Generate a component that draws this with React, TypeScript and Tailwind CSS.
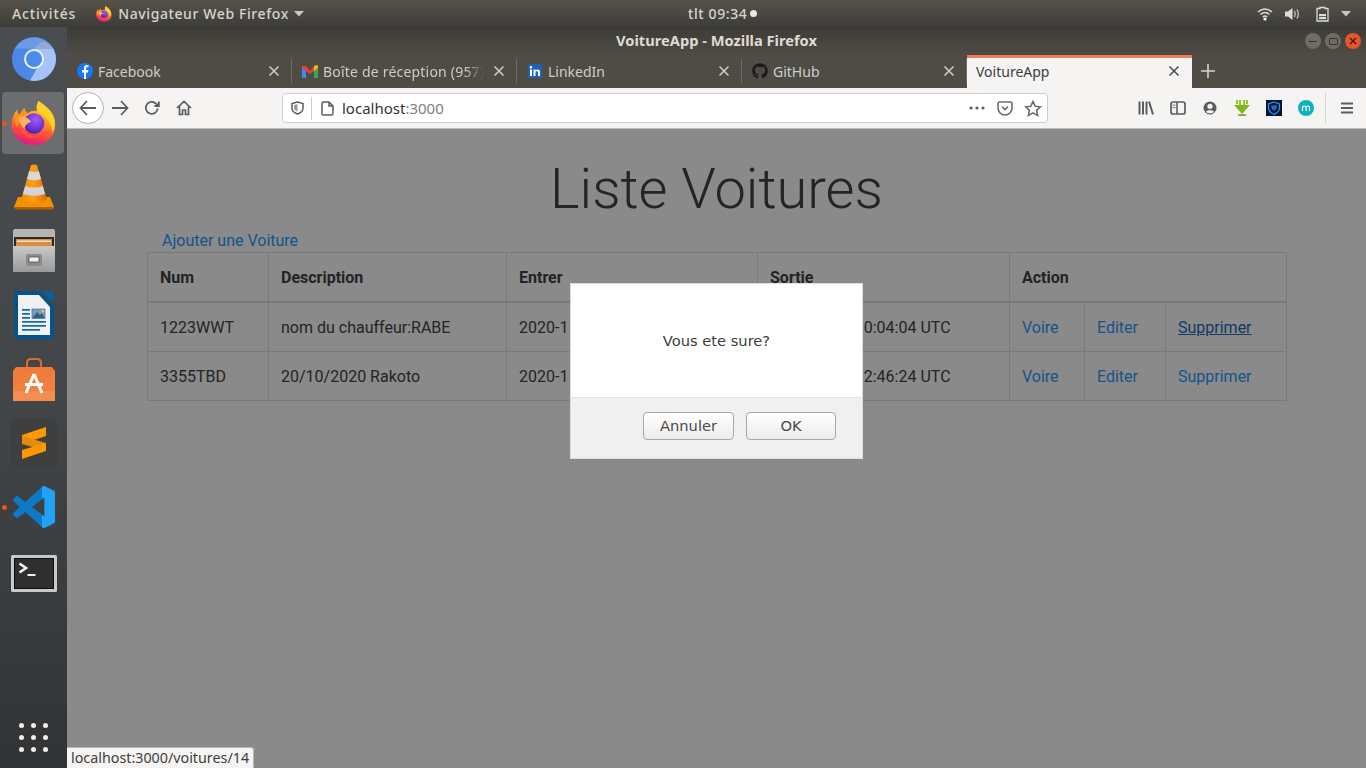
import React from "react";
import { FaGithub } from "react-icons/fa";

const FirefoxIcon = ({ s, id }: { s: number; id: string }) => (
  <svg width={s} height={s} viewBox="0 0 48 49">
    <defs>
      <linearGradient id={id + "a"} x1="0.7" y1="0" x2="0.42" y2="1">
        <stop offset="0" stopColor="#ffe02a" />
        <stop offset="0.38" stopColor="#ffa41f" />
        <stop offset="0.72" stopColor="#ff4b3a" />
        <stop offset="1" stopColor="#e5178a" />
      </linearGradient>
      <radialGradient id={id + "b"} cx="0.6" cy="0.3" r="0.8">
        <stop offset="0" stopColor="#a45cf5" />
        <stop offset="0.6" stopColor="#6a33d6" />
        <stop offset="1" stopColor="#3b1c9e" />
      </radialGradient>
    </defs>
    <path d="M29 1C34 5 42 10 45 18C48 26 47 36 40 42C33 48 24 49 16 47C7 44 0 36 0 26C0 20 2 15 6 10C6 13 7 15 9 16C10 13 12 10 14 8.5C14 11 15 13 18 14C21 11 24 11 27 12C26 8 27 4 29 1Z" fill={`url(#${id}a)`} />
    <path d="M6 10C6 13 7 15 9 16C10 13 12 10 14 8.5C14 11 15 13 18 14C12 16 8 20 6 30C3 26 3 16 6 10Z" fill="#ff8f1f" />
    <path d="M29 1C34 5 42 10 45 18C47 24 46 30 44 34C43 26 38 18 29 13C27 9 27 5 29 1Z" fill="#ffd22a" />
    <circle cx="24" cy="25" r="11" fill={`url(#${id}b)`} />
    <path d="M7 19C11 16 17 18 21 23C17 25 14 27 14 31C11 28 8 24 7 19Z" fill="#ffb45a" />
    <path d="M13 31C14 37 22 40 29 37C24 42 15 41 11 34Z" fill="#ff5a2e" />
  </svg>
);

const ChromiumIcon = () => (
  <svg width="44" height="44" viewBox="0 0 44 44">
    <circle cx="22" cy="22" r="22" fill="#4d88e6" />
    <path d="M3 11.5A22 22 0 0 1 41.5 12L22 12Z" fill="#6d9ae4" />
    <path d="M24 12L41.5 12A22 22 0 0 1 44 22A22 22 0 0 1 18 43.6L28 26Z" fill="#a4c4f9" />
    <path d="M30 4.5A22 22 0 0 1 41.5 12L22 12Z" fill="#95abd2" />
    <circle cx="22" cy="22" r="10" fill="#ecf2fd" />
    <circle cx="22" cy="22" r="8" fill="#4a8bf0" />
  </svg>
);

const VlcIcon = () => (
  <svg width="40" height="46" viewBox="0 0 40 46">
    <defs>
      <linearGradient id="vlc" x1="0" y1="0" x2="1" y2="0">
        <stop offset="0" stopColor="#f08c00" />
        <stop offset="0.5" stopColor="#ff9d1a" />
        <stop offset="1" stopColor="#d86f00" />
      </linearGradient>
    </defs>
    <path d="M4 33L0 43L2 45L38 45L40 43L36 33Z" fill="#f39200" />
    <path d="M0 43L40 43L38 45.5L2 45.5Z" fill="#b85c00" />
    <path d="M17 1Q20 0 23 1L33 36Q20 42 7 36Z" fill="url(#vlc)" />
    <path d="M15.2 7Q20 9 24.8 7L27 15Q20 17.5 13 15Z" fill="#d8d8d8" />
    <path d="M11.2 22Q20 25 28.8 22L31 30Q20 33.5 9 30Z" fill="#d4d4d4" />
  </svg>
);

const FilesIcon = () => (
  <svg width="42" height="44" viewBox="0 0 42 44">
    <defs>
      <linearGradient id="cab" x1="0" y1="0" x2="0" y2="1">
        <stop offset="0" stopColor="#c8c8c8" />
        <stop offset="1" stopColor="#9a9a9a" />
      </linearGradient>
    </defs>
    <rect x="0" y="0" width="42" height="43" rx="2" fill="#b5b5b5" />
    <rect x="1" y="8" width="40" height="9" fill="#2b2b2b" />
    <rect x="3" y="10" width="36" height="7" fill="#e08a3c" />
    <rect x="4" y="11.5" width="34" height="1.5" fill="#f8e7d0" />
    <rect x="0" y="17" width="42" height="26" rx="1.5" fill="url(#cab)" />
    <rect x="13" y="25" width="16" height="12" rx="2" fill="#8b8b8b" />
    <rect x="16" y="28" width="10" height="5" fill="#f0f0f0" stroke="#444" strokeWidth="0.7" />
  </svg>
);

const WriterIcon = () => (
  <svg width="40" height="48" viewBox="0 0 40 48">
    <path d="M2 0H26L40 15V45Q40 48 37 48H3Q0 48 0 45V2Q0 0 2 0Z" fill="#06528a" />
    <path d="M28 0H38Q40 0 40 2V12Z" fill="#0a5f9e" />
    <path d="M4 4H25L36 16V44H4Z" fill="#f0f1f2" />
    <rect x="8" y="18" width="8" height="1.7" fill="#1565a0" />
    <rect x="8" y="22" width="8" height="1.7" fill="#1565a0" />
    <rect x="8" y="26" width="8" height="1.7" fill="#1565a0" />
    <rect x="18" y="18" width="13" height="9.5" fill="#7f9fb8" stroke="#1565a0" strokeWidth="0.6" />
    <path d="M18.5 27L23 21L26 24L28 22L30.5 27Z" fill="#315f80" />
    <circle cx="29" cy="20" r="1.5" fill="#e8c64a" />
    <rect x="8" y="30" width="24" height="1.7" fill="#1565a0" />
    <rect x="8" y="34" width="24" height="1.7" fill="#1565a0" />
    <rect x="8" y="38" width="18" height="1.7" fill="#1565a0" />
  </svg>
);

const StoreIcon = () => (
  <svg width="42" height="43" viewBox="0 0 42 43">
    <defs>
      <linearGradient id="bag" x1="0" y1="0" x2="0" y2="1">
        <stop offset="0" stopColor="#ef7a3a" />
        <stop offset="1" stopColor="#f28444" />
      </linearGradient>
    </defs>
    <path d="M14 9V5Q14 1 18 1H24Q28 1 28 5V9" fill="none" stroke="#e06a2c" strokeWidth="2" />
    <path d="M3 9H39L42 13V43H0V13Z" fill="url(#bag)" />
    <rect x="0" y="33" width="42" height="10" fill="#f59156" opacity="0.7" />
    <path d="M21 16L13 35M21 16L29 35" stroke="#fff" strokeWidth="3" fill="none" />
    <rect x="12" y="25" width="18" height="3" fill="#fff" />
  </svg>
);

const SublimeIcon = () => (
  <svg width="48" height="48" viewBox="0 0 48 48">
    <rect width="48" height="48" rx="5" fill="#3f3f3f" />
    <path d="M12 16L36 8V17L12 25Z" fill="#ff9800" />
    <path d="M12 25L36 32V24L12 17Z" fill="#e88a08" />
    <path d="M12 31L36 24V32L12 40Z" fill="#ff9800" />
  </svg>
);

const VSCODE = "M23.15 2.587L18.21.21a1.494 1.494 0 0 0-1.705.29l-9.46 8.63-4.12-3.128a.999.999 0 0 0-1.276.057L.327 7.261A1 1 0 0 0 .326 8.74L3.899 12 .326 15.26a1 1 0 0 0 .001 1.479L1.65 17.94a.999.999 0 0 0 1.276.057l4.12-3.128 9.46 8.63a1.492 1.492 0 0 0 1.704.29l4.942-2.377A1.5 1.5 0 0 0 24 20.06V3.939a1.5 1.5 0 0 0-.85-1.352zm-5.146 14.861L10.826 12l7.178-5.448v10.896z";

const VscodeIcon = () => (
  <svg width="42" height="42" viewBox="0 0 24 24">
    <defs>
      <clipPath id="vsc">
        <rect x="16.6" y="0" width="8" height="24" />
      </clipPath>
    </defs>
    <path d={VSCODE} fill="#0e79c6" />
    <path clipPath="url(#vsc)" d={VSCODE} fill="#22a2f5" />
  </svg>
);

const TerminalIcon = () => (
  <svg width="46" height="37" viewBox="0 0 46 37">
    <rect width="46" height="37" rx="1.5" fill="#c9c9c9" />
    <rect x="3.5" y="3.5" width="39" height="30" fill="#2f2f2f" stroke="#0d0d0d" strokeWidth="1" />
    <path d="M8.5 8.5L15 13L8.5 17.5" stroke="#f2f2f2" strokeWidth="2.6" fill="none" />
    <rect x="16.5" y="19" width="8" height="2" fill="#f2f2f2" />
  </svg>
);

const DockSlot = ({ children, active, dot, low }: { children: React.ReactNode; active?: boolean; dot?: boolean; low?: boolean }) => (
  <div className="relative flex h-16 w-[67px] items-center justify-center">
    {active && <div className="absolute left-[2px] top-[1px] h-[62px] w-[62px] rounded-[4px] bg-[#6c6d6e]" />}
    {dot && <div className="absolute left-[2px] top-[29.5px] h-[5px] w-[5px] rounded-full bg-[#e9541f]" />}
    <div className={`relative flex ${low ? "mt-[5px]" : ""}`}>{children}</div>
  </div>
);

const CloseX = ({ color }: { color: string }) => (
  <svg width="12" height="12" viewBox="0 0 12 12" className="shrink-0">
    <path d="M1.5 1.5L10.5 10.5M10.5 1.5L1.5 10.5" stroke={color} strokeWidth="1.5" />
  </svg>
);

const Tab = ({ icon, label, fade }: { icon: React.ReactNode; label: string; fade?: boolean }) => (
  <div className="relative flex h-[33px] w-[225px] shrink-0 items-center pb-[1px] pl-[10px]">
    <div className="flex h-4 w-4 shrink-0 items-center justify-center">{icon}</div>
    <span className={`ml-[5px] mr-[9px] min-w-0 flex-1 overflow-hidden whitespace-nowrap text-[14px] text-[#cfcdc8] ${fade ? "tracking-[0.2px] [mask-image:linear-gradient(to_right,black_88%,transparent)]" : ""}`}>{label}</span>
    <CloseX color="#cfcdc8" />
    <div className="ml-[11px] h-[25px] w-px shrink-0 bg-[#6f6c65]" />
  </div>
);

const TI = ({ children }: { children: React.ReactNode }) => (
  <div className="flex h-8 w-8 shrink-0 items-center justify-center">{children}</div>
);

const G = "#5c5c5c";

const Toolbar = () => (
  <div className="flex h-[41px] shrink-0 items-center border-b border-[#bdbbb8] bg-[#f5f4f3] pl-[5px]">
    <div className="flex h-8 w-8 shrink-0 items-center justify-center rounded-full border border-[#b5b3b0] bg-white">
      <svg width="18" height="16" viewBox="0 0 18 16"><path d="M8 1L1.5 8L8 15M1.5 8H17" stroke={G} strokeWidth="1.8" fill="none" /></svg>
    </div>
    <TI><svg width="18" height="16" viewBox="0 0 18 16"><path d="M10 1L16.5 8L10 15M16.5 8H1" stroke={G} strokeWidth="1.8" fill="none" /></svg></TI>
    <TI><svg width="16" height="16" viewBox="0 0 16 16"><path d="M13.7 8.5A6 6 0 1 1 12 3.6L14.6 5.8M14.8 1.5V6H10.5" stroke={G} strokeWidth="1.8" fill="none" /></svg></TI>
    <TI><svg width="16" height="16" viewBox="0 0 16 16"><path d="M1 8L8 1.5L15 8M3.5 6.5V14.5H6.5V10H9.5V14.5H12.5V6.5" stroke={G} strokeWidth="1.7" fill="none" /></svg></TI>
    <div className="ml-[82px] flex h-[30px] w-[766px] shrink-0 items-center rounded-[4px] border border-[#cfcdca] bg-white pr-[5px]">
      <div className="flex w-[28px] shrink-0 justify-center">
        <svg width="13" height="14" viewBox="0 0 13 14"><path d="M6.5 1L12 2.5V7C12 10 9.5 12 6.5 13C3.5 12 1 10 1 7V2.5Z" stroke={G} strokeWidth="1.5" fill="none" /><path d="M6.5 3V10.5C4.5 10 3 8.5 3 7V4Z" fill={G} opacity="0.6" /></svg>
      </div>
      <div className="h-[23px] w-px bg-[#cfcdca]" />
      <div className="flex w-[30px] shrink-0 justify-center">
        <svg width="13" height="15" viewBox="0 0 13 15"><path d="M2.5 1H8L12 5V12.5Q12 14 10.5 14H2.5Q1 14 1 12.5V2.5Q1 1 2.5 1ZM8 1V5H12" stroke={G} strokeWidth="1.5" fill="none" /></svg>
      </div>
      <span className="text-[15px] text-[#333333]">localhost<span className="text-[#7d7d7d]">:3000</span></span>
      <div className="ml-auto flex items-center">
        <svg width="16" height="4" viewBox="0 0 16 4"><circle cx="2" cy="2" r="1.6" fill={G} /><circle cx="8" cy="2" r="1.6" fill={G} /><circle cx="14" cy="2" r="1.6" fill={G} /></svg>
        <svg className="ml-[12px]" width="16" height="15" viewBox="0 0 16 15"><path d="M2.5 1H13.5Q15 1 15 2.5V7A7 7 0 0 1 1 7V2.5Q1 1 2.5 1ZM5 5.5L8 8.5L11 5.5" stroke="#6b6b6b" strokeWidth="1.6" fill="none" /></svg>
        <svg className="ml-[11px]" width="18" height="17" viewBox="0 0 18 17"><path d="M9 1.5L11.2 6.2L16.3 6.8L12.6 10.3L13.6 15.4L9 12.9L4.4 15.4L5.4 10.3L1.7 6.8L6.8 6.2Z" stroke="#6b6b6b" strokeWidth="1.6" fill="none" /></svg>
      </div>
    </div>
    <div className="ml-[82px] flex shrink-0 items-center">
      <TI><svg width="16" height="14" viewBox="0 0 16 14"><path d="M1.5 0.5V13.5M5 0.5V13.5M8.5 0.5V13.5M11 0.5L15 13.5" stroke={G} strokeWidth="2" fill="none" /></svg></TI>
      <TI><svg width="16" height="14" viewBox="0 0 16 14"><rect x="1" y="1" width="14" height="12" rx="2" stroke={G} strokeWidth="1.7" fill="none" /><rect x="2.5" y="3.5" width="3" height="1.2" fill={G} opacity="0.7" /><rect x="2.5" y="6" width="3" height="1.2" fill={G} opacity="0.7" /><path d="M7 1V13" stroke={G} strokeWidth="1.6" /></svg></TI>
      <TI><svg width="14" height="14" viewBox="0 0 14 14"><circle cx="7" cy="7" r="6.5" fill={G} /><circle cx="7" cy="5.3" r="2.6" fill="#f5f4f3" /><path d="M2.8 11C4 8.8 10 8.8 11.2 11Q7 13.5 2.8 11Z" fill="#f5f4f3" /></svg></TI>
      <TI><svg width="16" height="16" viewBox="0 0 16 16"><path d="M2 0H4V4H2ZM5 0H7V5H5ZM9 0H11V5H9ZM12 0H14V4H12Z" fill="#8fc62c" /><path d="M0 5H16L8 14Z" fill="#7db81f" /><ellipse cx="8" cy="15" rx="4.5" ry="1" fill="#4f7a16" opacity="0.7" /></svg></TI>
      <TI><svg width="16" height="16" viewBox="0 0 16 16"><rect width="16" height="16" fill="#0a1238" /><path d="M8 2L13.5 4V8C13.5 11 11 13 8 14.5C5 13 2.5 11 2.5 8V4Z" stroke="#1fa0e6" strokeWidth="1.2" fill="none" /><path d="M5 5.5H11L10 9L8 11L6 9Z" fill="#1e78b8" /></svg></TI>
      <TI><svg width="16" height="16" viewBox="0 0 16 16"><circle cx="8" cy="8" r="8" fill="#0fb1bf" /><path d="M4.5 11V6.5M4.5 7.5C5 5.5 8 5.5 8 7.5V11M8 7.5C8.5 5.5 11.5 5.5 11.5 7.5V11" stroke="#fff" strokeWidth="1.2" fill="none" /></svg></TI>
      <div className="ml-[3px] h-[30px] w-px bg-[#d4d2cf]" />
      <div className="ml-[5px] flex h-8 w-8 items-center justify-center">
        <svg width="14" height="12" viewBox="0 0 14 12"><path d="M1 1.5H13M1 6H13M1 10.5H13" stroke={G} strokeWidth="1.9" /></svg>
      </div>
    </div>
  </div>
);

const rows = [
  { num: "1223WWT", desc: "nom du chauffeur:RABE", a: "2020-11-18 10:04:04 UTC", hover: true },
  { num: "3355TBD", desc: "20/10/2020 Rakoto", a: "2020-11-18 12:46:24 UTC", hover: false },
];

const td = "border border-[#dee2e6] px-3 pb-[11px] pt-[13px] align-top";
const th = "border border-[#dee2e6] border-b-2 px-3 pb-[11px] pt-[13px] text-left font-bold align-bottom";
const link = "text-[#2a9bff]";

export default function App() {
  return (
    <div className="flex h-[768px] w-[1366px] flex-col overflow-hidden bg-black font-['Noto_Sans',sans-serif]">
      <div className="relative flex h-[27px] shrink-0 items-center bg-gradient-to-b from-[#56534c] to-[#3d3c37] text-[14px] font-medium text-[#d6d5cf]">
        <span className="ml-3 tracking-[0.85px]">Activités</span>
        <span className="ml-5 flex"><FirefoxIcon s={16} id="ff1" /></span>
        <span className="ml-[6px] tracking-[0.6px]">Navigateur Web Firefox</span>
        <svg className="ml-[5px]" width="10" height="6" viewBox="0 0 10 6"><path d="M0 0H10L5 5.5Z" fill="#c9c8c2" /></svg>
        <div className="absolute left-[688px] top-0 flex h-[27px] items-center gap-[3px] tracking-[0.6px]">
          <span>tlt 09:34</span>
          <span className="h-[7px] w-[7px] rounded-full bg-[#e8e7e2]" />
        </div>
        <div className="ml-auto mr-[15px] flex items-center">
          <svg width="16" height="14" viewBox="0 0 16 14"><path d="M1 5Q8 -1 15 5M3.5 7.5Q8 3.5 12.5 7.5M5.8 10Q8 8 10.2 10" stroke="#dcdbd5" strokeWidth="1.5" fill="none" /><circle cx="8" cy="12" r="1.6" fill="#fff" /></svg>
          <svg className="ml-[12px]" width="16" height="14" viewBox="0 0 16 14"><path d="M0 4.5H3L7.5 1V13L3 9.5H0Z" fill="#dcdbd5" /><path d="M9.5 4Q11 7 9.5 10M12 2.5Q14.5 7 12 11.5" stroke="#bdbcb6" strokeWidth="1.4" fill="none" /></svg>
          <svg className="ml-[15px]" width="13" height="16" viewBox="0 0 13 16"><path d="M4 1.5H9V2.5H12V15H1V2.5H4Z" stroke="#dcdbd5" strokeWidth="1.3" fill="none" /><rect x="3" y="8" width="7" height="2.2" fill="#dcdbd5" /><rect x="3" y="11" width="7" height="2.2" fill="#dcdbd5" /></svg>
          <svg className="ml-[12px]" width="10" height="6" viewBox="0 0 10 6"><path d="M0 0H10L5 5.5Z" fill="#c9c8c2" /></svg>
        </div>
      </div>
      <div className="flex min-h-0 flex-1">
        <div className="flex w-[67px] shrink-0 flex-col bg-gradient-to-b from-[#4a4d50] via-[#434649] to-[#313335]">
          <DockSlot><ChromiumIcon /></DockSlot>
          <DockSlot active dot><FirefoxIcon s={46} id="ff2" /></DockSlot>
          <DockSlot><VlcIcon /></DockSlot>
          <DockSlot><FilesIcon /></DockSlot>
          <DockSlot><WriterIcon /></DockSlot>
          <DockSlot><StoreIcon /></DockSlot>
          <DockSlot><SublimeIcon /></DockSlot>
          <DockSlot dot><VscodeIcon /></DockSlot>
          <DockSlot low><TerminalIcon /></DockSlot>
          <div className="mb-[16px] mt-auto grid w-[67px] grid-cols-3 justify-items-center gap-y-[7px] px-[15px]">
            {Array.from({ length: 9 }).map((_, i) => (
              <span key={i} className="h-[5px] w-[5px] rounded-full bg-[#eeeeec]" />
            ))}
          </div>
        </div>
        <div className="relative flex min-w-0 flex-1 flex-col">
          <div className="relative flex h-[28px] shrink-0 items-center justify-center bg-gradient-to-b from-[#3c3b37] to-[#4f4c45] pb-[2px]">
            <span className="text-[14.67px] font-bold text-[#dfdbd2]">VoitureApp - Mozilla Firefox</span>
            <div className="absolute right-[5px] top-[6px] flex gap-[4px]">
              <div className="flex h-4 w-4 items-center justify-center rounded-full bg-[#6e6c66]"><div className="h-px w-2 bg-[#35342f]" /></div>
              <div className="flex h-4 w-4 items-center justify-center rounded-full bg-[#6e6c66]"><div className="h-[7px] w-[9px] rounded-[1px] border border-[#35342f]" /></div>
              <div className="flex h-4 w-4 items-center justify-center rounded-full bg-[#e5572a]"><CloseXSmall /></div>
            </div>
          </div>
          <div className="flex h-[33px] shrink-0 items-start bg-[#4f4c45]">
            <Tab label="Facebook" icon={
              <svg width="16" height="16" viewBox="0 0 16 16"><circle cx="8" cy="8" r="8" fill="#1877f2" /><path d="M9 16V9.5H11L11.4 7H9V5.6C9 4.8 9.3 4.3 10.3 4.3H11.5V2.2C10 1.9 7 1.7 7 5V7H5V9.5H7V16Z" fill="#fff" /></svg>
            } />
            <Tab label="Boîte de réception (957)" fade icon={
              <svg width="16" height="13" viewBox="0 0 16 13"><path d="M0 2.5L4 5V13H1Q0 13 0 12Z" fill="#4285f4" /><path d="M16 2.5L12 5V13H15Q16 13 16 12Z" fill="#34a853" /><path d="M0 1L4 1L8 6L12 1L16 1L16 3L8 9L0 3Z" fill="#ea4335" /><path d="M12 1L14.5 0Q16 0 16 2V3L12 6Z" fill="#fbbc04" /></svg>
            } />
            <Tab label="LinkedIn" icon={
              <svg width="14" height="14" viewBox="0 0 14 14"><rect width="14" height="14" fill="#1f62b0" /><rect x="2" y="5.5" width="2" height="6.5" fill="#fff" /><circle cx="3" cy="3.3" r="1.2" fill="#fff" /><path d="M5.5 5.5H7.5V6.5C8.5 5 12 4.8 12 8V12H10V8.5C10 6.8 7.5 6.8 7.5 8.5V12H5.5Z" fill="#fff" /></svg>
            } />
            <Tab label="GitHub" icon={<FaGithub size={16} color="#1d1c1a" />} />
            <div className="flex h-[33px] w-[225px] shrink-0 items-center border-t-[3px] border-[#f07a55] bg-[#f5f4f3] pb-[4px] pl-[9px] pr-[12px]">
              <span className="flex-1 text-[14px] text-[#3d3d3d]">VoitureApp</span>
              <CloseX color="#4a4a4a" />
            </div>
            <div className="flex h-[32px] w-[32px] items-center justify-center">
              <svg width="14" height="14" viewBox="0 0 14 14"><path d="M7 0V14M0 7H14" stroke="#d5d3ce" strokeWidth="1.6" /></svg>
            </div>
          </div>
          <Toolbar />
          <div className="relative min-h-0 flex-1 bg-white font-['Roboto',sans-serif] text-[16px] leading-6 text-[#3f4347]">
            <h1 className="pt-[27px] text-center text-[56px] font-light leading-[67px]">Liste Voitures</h1>
            <div className="ml-[80px] mt-[5px] h-6 w-[1139px] pl-[15px] leading-[26px]">
              <a className={link} href="#">Ajouter une Voiture</a>
            </div>
            <table className="ml-[80px] w-[1139px] table-fixed border-collapse">
              <colgroup>
                <col className="w-[121px]" />
                <col className="w-[238px]" />
                <col className="w-[251px]" />
                <col className="w-[252px]" />
                <col className="w-[75px]" />
                <col className="w-[81px]" />
                <col className="w-[121px]" />
              </colgroup>
              <thead>
                <tr>
                  <th className={th}>Num</th>
                  <th className={th}>Description</th>
                  <th className={th}>Entrer</th>
                  <th className={th}>Sortie</th>
                  <th className={th} colSpan={3}>Action</th>
                </tr>
              </thead>
              <tbody>
                {rows.map((r) => (
                  <tr key={r.num}>
                    <td className={td}>{r.num}</td>
                    <td className={td}>{r.desc}</td>
                    <td className={td}>{r.a}</td>
                    <td className={td}>{r.a}</td>
                    <td className={td}><a className={link} href="#">Voire</a></td>
                    <td className={td}><a className={link} href="#">Editer</a></td>
                    <td className={td}>
                      <a className={r.hover ? "text-[#1a6bb8] underline" : link} href="#">Supprimer</a>
                    </td>
                  </tr>
                ))}
              </tbody>
            </table>
            <div className="absolute inset-0 flex justify-center bg-black/[0.46] pt-[154px]">
              <div className="h-[176px] w-[293px] overflow-hidden border border-[#dcdcdc] bg-white font-['DejaVu_Sans',sans-serif]">
                <div className="flex h-[113px] items-center justify-center pt-[1px] text-[14.67px] text-[#3d3d3d]">Vous ete sure?</div>
                <div className="flex h-[61px] items-start justify-end gap-3 border-t border-[#e2e2e2] bg-[#f0f0f0] pr-[26px] pt-[14px]">
                  <button className="h-[28px] w-[91px] rounded-[4px] border border-[#a8a8a8] bg-gradient-to-b from-white to-[#ececec] text-[14.67px] text-[#4a4a4a]">Annuler</button>
                  <button className="h-[28px] w-[90px] rounded-[4px] border border-[#a8a8a8] bg-gradient-to-b from-white to-[#ececec] text-[14.67px] text-[#4a4a4a]">OK</button>
                </div>
              </div>
            </div>
            <div className="absolute bottom-0 left-0 flex h-[21px] items-center rounded-tr-[3px] border-r border-t border-[#b8b6b3] bg-[#f5f4f3] pl-[4px] pr-[4px] font-['Noto_Sans',sans-serif] text-[14.3px] text-[#3d3d3d]">
              localhost:3000/voitures/14
            </div>
          </div>
        </div>
      </div>
    </div>
  );
}

function CloseXSmall() {
  return (
    <svg width="8" height="8" viewBox="0 0 8 8">
      <path d="M1 1L7 7M7 1L1 7" stroke="#3a1a0a" strokeWidth="1.2" />
    </svg>
  );
}
